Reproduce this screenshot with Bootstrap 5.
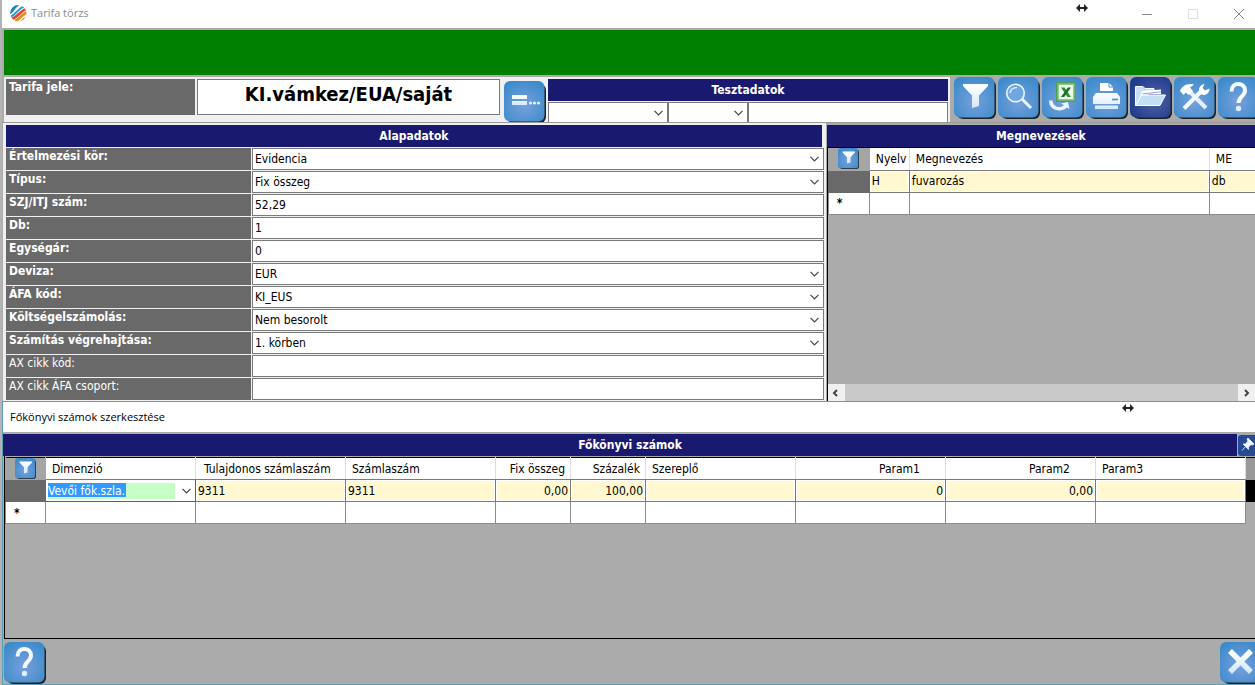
<!DOCTYPE html>
<html lang="hu">
<head>
<meta charset="utf-8">
<meta name="viewport" content="width=device-width, initial-scale=1">
<title>Tarifa törzs</title>
<link href="https://cdn.jsdelivr.net/npm/bootstrap@5.3.0/dist/css/bootstrap.min.css" rel="stylesheet">
<style>
:root{--navy:#191970;--slate:#696969;--face:#ababab;--line:#7a7a7a;--cream:#fff8d0;
--chev:url("data:image/svg+xml,%3Csvg xmlns='http://www.w3.org/2000/svg' width='9' height='6'%3E%3Cpath d='M.5 .8 4.5 4.8 8.5 .8' fill='none' stroke='%23444' stroke-width='1.2'/%3E%3C/svg%3E")}
body{font:12px/16px "DejaVu Sans Condensed","DejaVu Sans",sans-serif;color:#000;background:var(--face);border-left:2px solid #b4b4b4;overflow-x:hidden}
.min-page{min-height:100vh}
.titlebar{height:28px;background:#fff;color:#8c8c8c;font:11px/16px "Open Sans",sans-serif;padding:0 0 2px 8px}
.sys{border:0;background:none;padding:0 0 0 14px;width:46px;height:24px;color:#909090}
.grip{width:12px;height:8px}
.title-grip{margin:4px 29px 0 0}
.sub-grip{margin:2px 121px 0 0}
.banner{height:45px;background:green;margin:2px 0 2px 2px}
.toolbar{height:45px;margin-left:2px}
.light{background:#f0f0f0}
.field-label{background:var(--slate);color:#fff;padding:0 3px;font-weight:bold;line-height:16px}
.box{border:1px solid var(--line);border-radius:0;background-color:#fff;font:inherit;color:#000;padding:0 2px;height:22px;min-width:0;width:100%;appearance:none;outline:0}
select.box{background-image:var(--chev);background-repeat:no-repeat;background-position:right 4px center}
.code-row{padding:2px 2px 0 2px}
.code-label{width:189px;height:36px}
.code-box{font-size:20px;font-weight:bold;height:36px;text-align:center;padding-bottom:6px}
.code-wrap{flex:1 1 0;min-width:120px;margin:0 4px 0 2px}
.pick{margin:2px 2px 0 0}
.test-pane{width:400px}
.head{height:22px;background:var(--navy);color:#fff;font-weight:bold;font-size:12px;line-height:22px;text-align:center;margin:0}
.ledger-head{padding-left:20px}
.tests{height:21px;margin-top:1px;grid-template-columns:120px 80px 1fr}
.tests .box{height:21px;border-bottom:0}
.tb-set{width:305px;flex:none;overflow:hidden;padding-left:4px;gap:2px}
.tile{width:42px;height:42px;flex:none;border:0;padding:0;background:none}
.tile svg{display:block;width:42px;height:42px}
.mini{border:0;background:none;padding:0;width:21px;height:21px;display:block;margin:0 auto;line-height:0}
.mini svg{width:21px;height:21px;display:block}
.middle{display:grid;grid-template-columns:65.75% minmax(0,1fr);border-top:1px solid #999;height:279px}
.form-pane{padding:2px 2px 0 3px;margin-left:1px}
.form-pane .head{margin-right:2px}
.form-line{display:grid;grid-template-columns:245px minmax(0,1fr);column-gap:1px;height:22px;margin-top:1px}
.form-line.thin .field-label{font-weight:normal}
.names{padding:2px 0 0 1px;min-width:0}
.grid-wrap{border-left:1px solid #000;border-top:1px solid #000;overflow:hidden;min-width:0}
.dg{table-layout:fixed;border-collapse:collapse}
.dg th,.dg td{height:22px;padding:0 2px;border:1px solid #8c8c8c;white-space:nowrap;overflow:hidden;background:#fff}
.dg th{font-weight:normal;padding:0 6px;border-color:#ddd #ddd var(--line);border-top:0}
.dg thead th:first-child{background:#a5a5a5;padding:0;border-color:#a5a5a5}
.dg .current td{background:var(--cream);border-color:var(--line);box-shadow:inset 0 0 0 1px #fff}
.dg .current td:first-child{background:var(--slate);border-color:var(--slate);box-shadow:none}
.dg td:first-child{padding-left:8px;font-weight:bold}
.dg .num{text-align:right}
.dg th.num{padding-right:5px}
.dg th.wide{padding-right:25px}
.dg td.edit{padding:0;border:1px solid #0078d7!important}
.combo{display:block;border:0;height:20px;background-color:#fff;color:#fff;background-image:var(--chev),linear-gradient(#39f,#39f),linear-gradient(#c6ffc6,#c6ffc6)!important;background-size:9px 6px,78px 14px,127px 16px;background-position:right 4px center,2px 2px,2px 2px!important}
.combo option{color:#000}
.scroll{height:17px;background:#f0f0f0}
.scroll button{width:17px;border:0;background:none;padding:0;line-height:0}
.thumb{background:#c9c9c9}
.subwin{border:1px solid #5c9fb8;border-right:0}
.subtitle{height:30px;background:#fff;padding-left:7px;margin-bottom:2px;font:11px/16px "Open Sans",sans-serif}
.pin{width:18px;height:22px;border:0;padding:0;background:none;overflow:hidden}
.pin svg{display:block}
.ledger{border-left:1px solid #000;border-bottom:1px solid #000;overflow:hidden;margin-left:1px}
.ledger .dg{border-top:1px solid #000;margin-top:1px}
.ledger .tail{background:#999;border-color:#999}
.ledger td.tail{background:#000!important;border-color:#000!important;box-shadow:none!important}
.ledger td.none{background:var(--face);border-color:var(--face);border-left-color:#8c8c8c}
.foot{height:45px;padding:3px 0 0 1px;overflow:hidden}
.foot .out{margin-right:-7px}
</style>
<script src="https://cdn.jsdelivr.net/npm/bootstrap@5.3.0/dist/js/bootstrap.bundle.min.js"></script>
</head>
<body>
<svg width="0" height="0" class="position-absolute" aria-hidden="true">
<defs>
<radialGradient id="blue" cx=".5" cy=".6" r=".65"><stop offset="0" stop-color="#78a0dc"/><stop offset="1" stop-color="#3d8bcb"/></radialGradient>
<radialGradient id="dark" cx=".6" cy=".55" r=".65"><stop offset="0" stop-color="#5560a4"/><stop offset="1" stop-color="#1f3d8d"/></radialGradient>
<linearGradient id="pale" x2="0" y2="1"><stop offset="0" stop-color="#fff"/><stop offset="1" stop-color="#d3e9fb"/></linearGradient>
<symbol id="plate" viewBox="0 0 42 42"><rect x="3" y="3" width="39" height="39" rx="6" fill="#222"/><rect width="40.500" height="40.500" rx="6" fill="url(#blue)"/></symbol>
<symbol id="funnel" viewBox="0 0 42 42"><path d="M9 7H34V9L25 18.500V29L18 31V18.500L9 9Z" fill="url(#pale)"/></symbol>
<symbol id="ask" viewBox="0 0 42 42"><path d="M13.500 14.500C13.500 4 27 5 27 13.500C27 19 20.500 20 20.500 26" fill="none" stroke="#f4faff" stroke-width="4"/><circle cx="20.500" cy="31.500" r="2.700" fill="#def"/></symbol>
</defs></svg>
<div class="d-flex flex-column min-page">
<header class="titlebar d-flex align-items-center">
<svg width="17" height="17" viewBox="0 0 17 17"><defs><clipPath id="ball"><circle cx="8.300" cy="8.300" r="8.200"/></clipPath></defs><g clip-path="url(#ball)"><rect width="17" height="17" fill="#fff"/><path d="M-1 9.500C5 7 4 3 11-1H-1Z" fill="#1782c0"/><path d="M-1 12.500C7 10 6 4 15 1" stroke="#1f9bd6" stroke-width="2" fill="none"/><path d="M0 15C9 12 9 6 18 3" stroke="#e8442c" stroke-width="2.600" fill="none"/><path d="M3 17.500C11 14 11 9 18 7" stroke="#f08a18" stroke-width="3" fill="none"/><path d="M9 17C12 15 14 12 18 11V17Z" fill="#e8541c"/></g></svg>
<span class="ms-1 me-auto">Tarifa törzs</span>
<svg class="grip title-grip align-self-start" viewBox="0 0 12 8"><path d="M0 4 4 0V3H8V0L12 4 8 8V5H4V8Z" fill="#222"/></svg>
<button class="sys" aria-label="Kis méret"><svg width="12" height="12"><path d="M1 6.500H11" stroke="#888"/></svg></button><button class="sys" aria-label="Teljes méret"><svg width="12" height="12"><path d="M1.500 1.500H10.500V10.500H1.500Z" stroke="#ddd" fill="none"/></svg></button><button class="sys" aria-label="Bezárás"><svg width="12" height="12"><path d="M1 1 11 11M11 1 1 11" stroke="#888"/></svg></button>
</header>
<div class="banner"></div>
<div class="toolbar d-flex">
<div class="code-row light d-flex flex-grow-1 align-items-start">
<label class="field-label code-label" for="code">Tarifa jele:</label>
<div class="code-wrap"><input class="box code-box" id="code" value="KI.vámkez/EUA/saját"></div>
<button class="tile pick" aria-label="Választás"><svg viewBox="0 0 42 42"><use href="#plate"/><path d="M8 14H23V18H8ZM8 20H23V24H8Z" fill="url(#pale)"/><g fill="#e4f1ff"><circle cx="26.500" cy="22" r="1.600"/><circle cx="30.500" cy="22" r="1.600"/><circle cx="34.500" cy="22" r="1.600"/></g></svg></button>
<section class="test-pane"><h2 class="head">Tesztadatok</h2><div class="tests d-grid"><select class="box" aria-label="Tesztadat 1"><option></option></select><select class="box" aria-label="Tesztadat 2"><option></option></select><input class="box" aria-label="Tesztadat 3"></div></section>
</div>
<div class="tb-set d-flex">
<button class="tile" aria-label="Szűrő"><svg viewBox="0 0 42 42"><use href="#plate"/><use href="#funnel"/></svg></button>
<button class="tile" aria-label="Keresés"><svg viewBox="0 0 42 42"><use href="#plate"/><circle cx="17.500" cy="16" r="8.800" fill="#6fa8e0" stroke="#eaf5ff" stroke-width="1.600"/><path d="M12 16Q13 10.500 19 10.500" stroke="#d5e9fb" fill="none" stroke-width="1.500"/><path d="M24 22 33 31" stroke="#eaf5ff" stroke-width="3"/></svg></button>
<button class="tile" aria-label="Excel export"><svg viewBox="0 0 42 42"><use href="#plate"/><rect x="14.700" y="5.700" width="18.600" height="18.600" fill="#8cc887" stroke="#4f9f58" stroke-width="1.400"/><rect x="17" y="8" width="14" height="14" fill="#eef8ea"/><path d="M19 10.500H22.500L29 20H25.500Z" fill="#2f8f38"/><path d="M29 10.500H25.800L19 20H22.200Z" fill="#1d6b2b"/><path d="M7 23.500H10.500C11 30 18 32 22 28L19 26.500 26 25 27.500 32 25 30.500C19 36 7 34 7 23.500Z" fill="#edf6ff"/></svg></button>
<button class="tile" aria-label="Nyomtatás"><svg viewBox="0 0 42 42"><use href="#plate"/><path d="M14 6H23L27 10V14H14Z" fill="#fff"/><path d="M23 6V10H27" stroke="#4d90d0" fill="none"/><path d="M10 16H31L34 20V27H7V20ZM9 28.500H32V32H9Z" fill="url(#pale)"/><path d="M26 22.500H32" stroke="#478cca" stroke-width="1.600"/></svg></button>
<button class="tile" aria-label="Megnyitás"><svg viewBox="0 0 42 42"><rect x="3" y="3" width="39" height="39" rx="6" fill="#222"/><rect width="40.500" height="40.500" rx="6" fill="url(#dark)"/><path d="M5.500 29V9.500H13L15 11.500H24V13" fill="#c9def3" stroke="#f4faff"/><path d="M8 26 12 14 31 12.500V17H15Z" fill="#fff"/><path d="M12 17 31 14.800" stroke="#5a78b8" stroke-width=".7"/><path d="M11.500 18H35.500L30 28.500H5.800Z" fill="#c4dff4" stroke="#fff"/></svg></button>
<button class="tile" aria-label="Beállítások"><svg viewBox="0 0 42 42"><use href="#plate"/><path d="M16 15 32 31" stroke="#e3f1ff" stroke-width="4"/><path d="M6 14C8 9 13 6 20 7.500L16 10.500 19 14 14.500 18 12 15.500 9.500 18Z" fill="#fff"/><path d="M10 31.500 27 14.500" stroke="#f1f8ff" stroke-width="4"/><path d="M27.500 17.500C23 14 25 8 30.500 7L28.500 11 31 13.500 35.500 11.500C35.500 17 31 19 27.500 17.500Z" fill="#fff"/></svg></button>
<button class="tile" aria-label="Súgó"><svg viewBox="0 0 42 42"><use href="#plate"/><use href="#ask"/></svg></button>
</div></div>
<main class="middle">
<section class="form-pane light"><h2 class="head">Alapadatok</h2>
<div class="form-line"><label class="field-label" for="f1">Értelmezési kör:</label><select class="box" id="f1"><option>Evidencia</option></select></div>
<div class="form-line"><label class="field-label" for="f2">Típus:</label><select class="box" id="f2"><option>Fix összeg</option></select></div>
<div class="form-line"><label class="field-label" for="f3">SZJ/ITJ szám:</label><input class="box" id="f3" value="52,29"></div>
<div class="form-line"><label class="field-label" for="f4">Db:</label><input class="box" id="f4" value="1"></div>
<div class="form-line"><label class="field-label" for="f5">Egységár:</label><input class="box" id="f5" value="0"></div>
<div class="form-line"><label class="field-label" for="f6">Deviza:</label><select class="box" id="f6"><option>EUR</option></select></div>
<div class="form-line"><label class="field-label" for="f7">ÁFA kód:</label><select class="box" id="f7"><option>KI_EUS</option></select></div>
<div class="form-line"><label class="field-label" for="f8">Költségelszámolás:</label><select class="box" id="f8"><option>Nem besorolt</option></select></div>
<div class="form-line"><label class="field-label" for="f9">Számítás végrehajtása:</label><select class="box" id="f9"><option>1. körben</option></select></div>
<div class="form-line thin"><label class="field-label" for="f10">AX cikk kód:</label><input class="box" id="f10"></div>
<div class="form-line thin"><label class="field-label" for="f11">AX cikk ÁFA csoport:</label><input class="box" id="f11"></div>
</section>
<section class="names d-flex flex-column"><h2 class="head">Megnevezések</h2>
<div class="grid-wrap flex-grow-1 d-flex flex-column">
<table class="dg" style="width:500px"><colgroup><col style="width:41px"><col style="width:40px"><col style="width:300px"><col></colgroup>
<thead><tr><th><button class="mini" aria-label="Szűrő"><svg viewBox="0 0 42 42"><use href="#plate" width="42" height="42"/><use href="#funnel" width="42" height="42"/></svg></button></th><th>Nyelv</th><th>Megnevezés</th><th>ME</th></tr></thead>
<tbody><tr class="current"><td></td><td>H</td><td>fuvarozás</td><td>db</td></tr><tr><td>*</td><td></td><td></td><td></td></tr></tbody></table>
<div class="scroll d-flex mt-auto"><button aria-label="Balra"><svg width="8" height="8"><path d="M5 1 2 4 5 7" fill="none" stroke="#444" stroke-width="2"/></svg></button><div class="thumb flex-grow-1"></div><button aria-label="Jobbra"><svg width="8" height="8"><path d="M2 1 5 4 2 7" fill="none" stroke="#444" stroke-width="2"/></svg></button></div>
</div></section>
</main>
<section class="subwin d-flex flex-column flex-grow-1">
<div class="subtitle d-flex align-items-center"><span class="me-auto">Főkönyvi számok szerkesztése</span><svg class="grip sub-grip align-self-start" viewBox="0 0 12 8"><path d="M0 4 4 0V3H8V0L12 4 8 8V5H4V8Z" fill="#222"/></svg></div>
<div class="d-flex ms-px"><h2 class="head ledger-head flex-grow-1">Főkönyvi számok</h2><button class="pin" aria-label="Rögzítés"><svg width="22" height="22" viewBox="0 0 22 22"><rect x="1" y="1" width="21" height="21" rx="3" fill="#284994"/><path d="M11 4 17 10 15 11 14 10.500 11.500 13V15.500L6 10H8.500L11 7 10 5ZM8.500 12.500 5 16.500" fill="#eef6ff" stroke="#eef6ff" stroke-width=".8"/></svg></button></div>
<div class="ledger flex-grow-1">
<table class="dg" style="width:1300px"><colgroup><col style="width:40px"><col style="width:150px"><col style="width:150px"><col style="width:150px"><col style="width:75px"><col style="width:75px"><col style="width:150px"><col style="width:150px"><col style="width:150px"><col style="width:150px"><col></colgroup>
<thead><tr><th><button class="mini" aria-label="Szűrő"><svg viewBox="0 0 42 42"><use href="#plate" width="42" height="42"/><use href="#funnel" width="42" height="42"/></svg></button></th><th>Dimenzió</th><th class="ps-2">Tulajdonos számlaszám</th><th>Számlaszám</th><th class="num">Fix összeg</th><th class="num">Százalék</th><th>Szereplő</th><th class="num wide">Param1</th><th class="num wide">Param2</th><th>Param3</th><th class="tail"></th></tr></thead>
<tbody><tr class="current"><td></td><td class="edit"><select class="box combo" aria-label="Dimenzió"><option>Vevői fők.szla.</option></select></td><td>9311</td><td>9311</td><td class="num">0,00</td><td class="num">100,00</td><td></td><td class="num">0</td><td class="num">0,00</td><td></td><td class="tail"></td></tr>
<tr><td>*</td><td></td><td></td><td></td><td></td><td></td><td></td><td></td><td></td><td></td><td class="none"></td></tr></tbody></table>
</div>
<footer class="foot d-flex justify-content-between"><button class="tile" aria-label="Súgó"><svg viewBox="0 0 42 42"><use href="#plate"/><use href="#ask"/></svg></button><button class="tile out" aria-label="Bezárás"><svg viewBox="0 0 42 42"><use href="#plate"/><path d="M10 9 31 30M31 9 10 30" stroke="url(#pale)" stroke-width="5.500"/></svg></button></footer>
</section>
</div>
</body>
</html>
